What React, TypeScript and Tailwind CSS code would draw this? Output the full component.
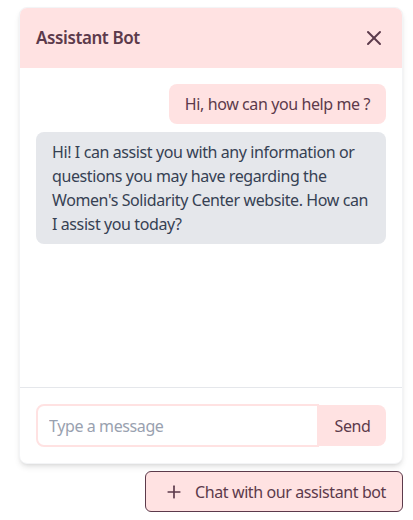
import { X, Plus } from 'lucide-react';

export default function App() {
  return (
    <div
      className="flex flex-col items-end w-[413px] h-[520px] bg-white pt-[7px] pr-[10px] tracking-[-0.4px]"
      style={{ fontFamily: '"Noto Sans", "Open Sans", sans-serif' }}
    >
      <div className="w-96 flex flex-col rounded-lg shadow-md bg-white overflow-hidden border border-gray-100">
        <div className="flex items-center justify-between h-[60px] px-4 bg-red-100 text-[#5c3a4b]">
          <h2 className="text-[17px] font-semibold">Assistant Bot</h2>
          <X className="w-6 h-6" strokeWidth={2} />
        </div>
        <div className="h-[320px] flex flex-col gap-2 px-4 pt-4 border-b border-gray-200">
          <div className="self-end bg-red-100 text-[#5c3a4b] rounded-lg px-4 py-2">
            Hi, how can you help me ?
          </div>
          <div className="self-start bg-gray-200 text-gray-700 rounded-lg px-4 py-2 leading-6">
            Hi! I can assist you with any information or questions you may have regarding the
            Women's Solidarity Center website. How can I assist you today?
          </div>
        </div>
        <div className="flex p-4">
          <input
            type="text"
            placeholder="Type a message"
            className="flex-1 h-[43px] border-2 border-red-100 rounded-l-lg px-[11px] outline-none placeholder:text-gray-400"
          />
          <button className="bg-red-100 text-[#5c3a4b] w-[67px] rounded-r-lg my-px">Send</button>
        </div>
      </div>
      <button className="mt-[7px] flex items-center gap-[11px] h-[41px] pl-[18px] pr-4 bg-red-100 text-[#5c3a4b] border border-[#5c3a4b] rounded-md">
        <Plus className="w-5 h-5" strokeWidth={2} />
        Chat with our assistant bot
      </button>
    </div>
  );
}
